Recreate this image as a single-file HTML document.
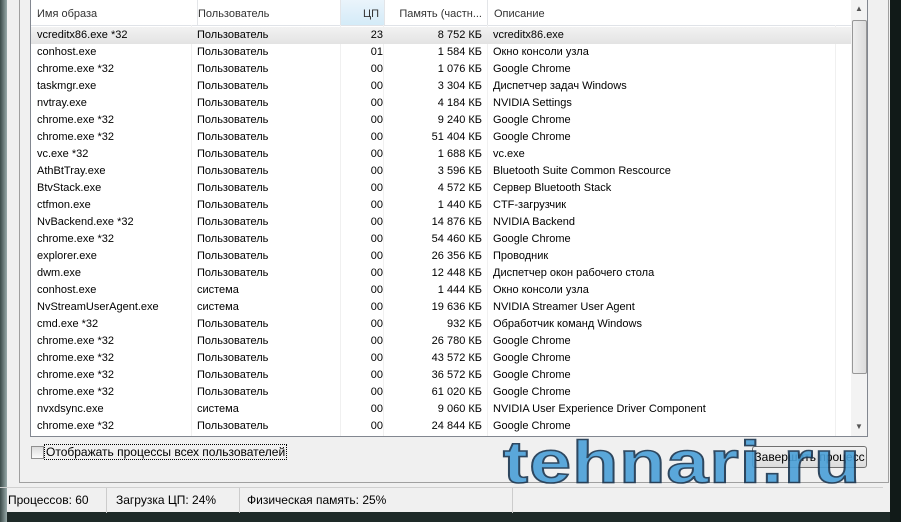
<!DOCTYPE html>
<html><head><meta charset="utf-8"><style>
body{margin:0;width:901px;height:522px;overflow:hidden;background:#1e2a28;font-family:"Liberation Sans",sans-serif;font-size:11px;color:#000;position:relative}
.win{position:absolute;left:7px;top:0;width:883px;height:512px;background:#f0f0f0}
.panel{position:absolute;left:12px;top:0;width:868px;height:482px;border:1px solid #a0a0a0;border-top:none;background:#f0f0f0}
.list{position:absolute;left:30px;top:0;width:836px;height:436px;border:1px solid #828790;border-top:none;background:#fff;overflow:hidden}
.hdr{position:absolute;left:0;top:0;height:25px;width:820px;border-bottom:1px solid #e0e3e8;background:#fff}
.hdr div,.row div{position:absolute;top:0;white-space:nowrap;overflow:hidden}
.hdr div{line-height:29px;height:25px;border-right:1px solid #e3e5e8;color:#333}
.sort{background:linear-gradient(#eaf4fb,#d4ebf8)}
.row{position:absolute;left:0;width:820px;height:17px;line-height:17px}
.sel{background:linear-gradient(#f2f2f2,#e3e3e3)}
.c1{left:6px;width:150px}.c2{left:166px;width:140px}.c3{left:310px;width:42px;text-align:right}.c4{left:356px;width:95px;text-align:right}.c5{left:462px;width:350px}
.vline{position:absolute;top:25px;bottom:0;width:1px;background:#f0f0f0}
.sb{position:absolute;left:820px;top:0;width:16px;height:436px;background:#f3f3f3}
.thumb{position:absolute;left:1px;top:20px;width:13px;height:352px;border:1px solid #979797;border-radius:2px;background:linear-gradient(90deg,#eee,#dcdcdc)}
.status{position:absolute;left:0;top:487px;width:883px;height:25px;border-top:1px solid #d0d0d0;line-height:25px;font-size:12px}
.status span{position:absolute;top:0;height:25px;border-right:1px solid #ccc}
.wm{position:absolute;left:503px;top:428px;font:bold 74px "Liberation Sans",sans-serif;color:#4aa0d8;letter-spacing:1px;-webkit-text-stroke:2px #1a3550;transform:scale(1.02,0.8);transform-origin:top left;opacity:.9}
</style></head><body>
<div class="win">
<div class="panel"></div>
</div>
<div style="position:absolute;left:890px;top:0;width:11px;height:522px;background:#111a18"></div>
<div style="position:absolute;left:0;top:0;width:7px;height:522px;background:linear-gradient(90deg,#3a4a48,#9aa)"></div>
<div class="list">
<div class="hdr">
<div style="left:0;width:160px;padding-left:6px">Имя образа</div>
<div style="left:161px;width:142px;padding-left:6px">Пользователь</div>
<div class="sort" style="left:310px;width:38px;text-align:right;padding-right:5px">ЦП</div>
<div style="left:353px;width:98px;text-align:right;padding-right:5px">Память (частн...</div>
<div style="left:457px;width:362px;padding-left:6px;border-right:none">Описание</div>
</div>
<div class="vline" style="left:160px"></div><div class="vline" style="left:309px"></div><div class="vline" style="left:352px"></div><div class="vline" style="left:456px"></div><div class="vline" style="left:804px"></div>
<div id="rows"></div>
<div class="sb"><div style="text-align:center;font-size:8px;color:#555;line-height:18px">▲</div><div class="thumb"></div><div style="position:absolute;bottom:0;width:16px;text-align:center;font-size:8px;color:#555;line-height:18px">▼</div></div>
</div>
<div style="position:absolute;left:31px;top:446px;width:11px;height:11px;border:1px solid #8f8f8f;background:linear-gradient(#ddd,#fafafa)"></div>
<div style="position:absolute;left:44px;top:444px;border:1px dotted #000;padding:0 1px;line-height:14px;font-size:12px">Отображать процессы всех пользователей</div>
<div style="position:absolute;left:752px;top:446px;width:113px;height:20px;border:1px solid #707070;border-radius:3px;background:linear-gradient(#f2f2f2,#dcdcdc);text-align:center;line-height:20px;font-size:12px">Завершить процесс</div>
<div class="status">
<span style="left:8px;width:98px">Процессов: 60</span>
<span style="left:116px;width:123px">Загрузка ЦП: 24%</span>
<span style="left:247px;width:265px">Физическая память: 25%</span>
</div>
<div class="wm">tehnari.ru</div>
<script>
var d=[["vcreditx86.exe *32","Пользователь","23","8 752 КБ","vcreditx86.exe"],
["conhost.exe","Пользователь","01","1 584 КБ","Окно консоли узла"],
["chrome.exe *32","Пользователь","00","1 076 КБ","Google Chrome"],
["taskmgr.exe","Пользователь","00","3 304 КБ","Диспетчер задач Windows"],
["nvtray.exe","Пользователь","00","4 184 КБ","NVIDIA Settings"],
["chrome.exe *32","Пользователь","00","9 240 КБ","Google Chrome"],
["chrome.exe *32","Пользователь","00","51 404 КБ","Google Chrome"],
["vc.exe *32","Пользователь","00","1 688 КБ","vc.exe"],
["AthBtTray.exe","Пользователь","00","3 596 КБ","Bluetooth Suite Common Rescource"],
["BtvStack.exe","Пользователь","00","4 572 КБ","Сервер Bluetooth Stack"],
["ctfmon.exe","Пользователь","00","1 440 КБ","CTF-загрузчик"],
["NvBackend.exe *32","Пользователь","00","14 876 КБ","NVIDIA Backend"],
["chrome.exe *32","Пользователь","00","54 460 КБ","Google Chrome"],
["explorer.exe","Пользователь","00","26 356 КБ","Проводник"],
["dwm.exe","Пользователь","00","12 448 КБ","Диспетчер окон рабочего стола"],
["conhost.exe","система","00","1 444 КБ","Окно консоли узла"],
["NvStreamUserAgent.exe","система","00","19 636 КБ","NVIDIA Streamer User Agent"],
["cmd.exe *32","Пользователь","00","932 КБ","Обработчик команд Windows"],
["chrome.exe *32","Пользователь","00","26 780 КБ","Google Chrome"],
["chrome.exe *32","Пользователь","00","43 572 КБ","Google Chrome"],
["chrome.exe *32","Пользователь","00","36 572 КБ","Google Chrome"],
["chrome.exe *32","Пользователь","00","61 020 КБ","Google Chrome"],
["nvxdsync.exe","система","00","9 060 КБ","NVIDIA User Experience Driver Component"],
["chrome.exe *32","Пользователь","00","24 844 КБ","Google Chrome"]];
var h="";d.forEach(function(r,i){h+='<div class="row'+(i==0?' sel':'')+'" style="top:'+(27+i*17)+'px"><div class="c1">'+r[0]+'</div><div class="c2">'+r[1]+'</div><div class="c3">'+r[2]+'</div><div class="c4">'+r[3]+'</div><div class="c5">'+r[4]+'</div></div>';});
document.getElementById("rows").innerHTML=h;
</script>
</body></html>
